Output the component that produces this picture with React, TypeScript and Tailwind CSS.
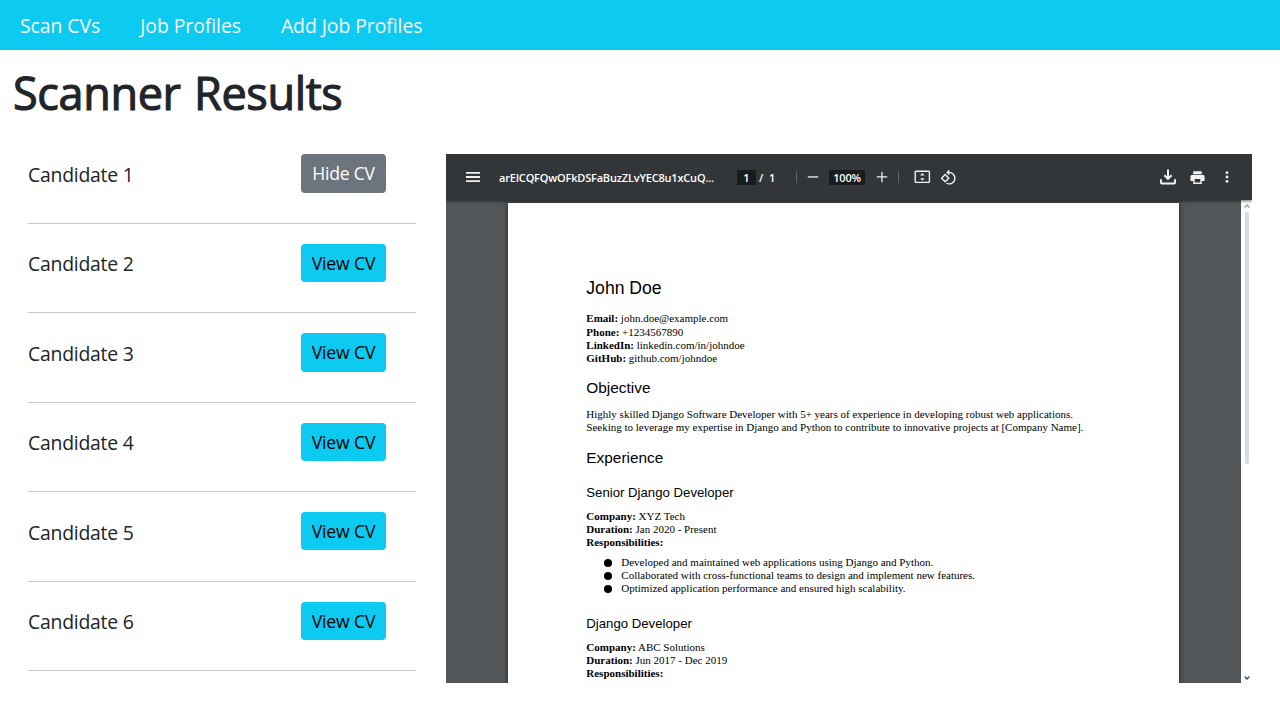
import type { ReactNode } from "react";

const UI = "font-['Open_Sans','Noto_Sans',sans-serif]";

const candidates = [1, 2, 3, 4, 5, 6];

function Candidate({ id, open }: { id: number; open: boolean }) {
  return (
    <li className="flex h-[89.45px] flex-col">
      <div className="flex h-[68.5px] items-start justify-between pr-[30px]">
        <span className="pt-[6.4px] text-[19.4px] leading-[28px] tracking-[-0.25px] text-[#212529]">
          Candidate {id}
        </span>
        <button
          className={
            open
              ? "h-[38.3px] w-[85px] rounded-[4px] bg-[#6c757d] text-[17.6px] leading-[37px] tracking-[-0.25px] whitespace-nowrap text-white"
              : "h-[38.3px] w-[85px] rounded-[4px] bg-[#0dcaf0] text-[17.6px] leading-[38px] tracking-[-0.15px] whitespace-nowrap text-black"
          }
        >
          {open ? "Hide CV" : "View CV"}
        </button>
      </div>
      <hr className="h-px border-0 bg-[#c7c8c9]" />
    </li>
  );
}

function Toolbar() {
  return (
    <div className="relative z-10 flex h-[46px] shrink-0 items-center bg-[#323639] text-[11px] font-semibold text-white shadow-[0_1px_3px_rgba(0,0,0,0.6)]">
      <svg className="ml-[20px] h-[12px] w-[14px]" viewBox="0 0 14 12" fill="#f1f1f1">
        <path d="M0 1h14v1.8H0zM0 5.1h14v1.8H0zM0 9.2h14V11H0z" />
      </svg>
      <span className="ml-[19px] w-[222px] pt-px text-[11px] tracking-[-0.19px] whitespace-nowrap">
        arEICQFQwOFkDSFaBuzZLvYEC8u1xCuQ...
      </span>
      <span className="ml-[16px] h-[15px] w-[19px] bg-[#191b1c] text-center leading-[16px]">1</span>
      <span className="ml-[3px] w-[37px] pt-px whitespace-pre">/&nbsp; 1</span>
      <span className="h-[12px] w-px bg-[#606468]" />
      <svg className="ml-[10px] size-[12px]" viewBox="0 0 12 12" fill="#f1f1f1">
        <path d="M.8 5.3h10.4v1.3H.8z" />
      </svg>
      <span className="ml-[10px] h-[15px] w-[36px] bg-[#191b1c] text-center leading-[16px] tracking-[-0.2px]">
        100%
      </span>
      <svg className="ml-[11px] size-[12px]" viewBox="0 0 12 12" fill="#f1f1f1">
        <path d="M.8 5.3h4.5V.8h1.3v4.5h4.6v1.3H6.6v4.6H5.3V6.6H.8z" />
      </svg>
      <span className="ml-[10px] h-[12px] w-px bg-[#606468]" />
      <svg className="ml-[15px] h-[14px] w-[17px]" viewBox="0 0 17 14" fill="none" stroke="#f1f1f1">
        <rect x="1.2" y="1.2" width="14.2" height="11.2" rx="0.8" strokeWidth="1.4" />
        <path d="M8.3 3 10.5 5.6H6.1zM8.3 10.8 6.1 8.2h4.4z" fill="#f1f1f1" stroke="none" />
      </svg>
      <svg className="ml-[9px] size-[17px]" viewBox="0 0 24 24" fill="#f1f1f1">
        <path d="M7.34 6.41.86 12.9l6.49 6.48 6.49-6.48-6.5-6.49zM3.69 12.9l3.66-3.66L11 12.9l-3.66 3.66-3.65-3.66zm15.67-6.26A8.95 8.95 0 0 0 13 4V.76L8.76 5 13 9.24V6c1.79 0 3.58.68 4.95 2.05a7.007 7.007 0 0 1 0 9.9 6.973 6.973 0 0 1-7.79 1.44l-1.49 1.49C10.02 21.62 11.51 22 13 22c2.3 0 4.61-.88 6.36-2.64a8.98 8.98 0 0 0 0-12.72z" />
      </svg>
      <div className="ml-auto flex items-center pr-[23px]">
        <svg className="h-[16px] w-[17px]" viewBox="0 0 17 16" fill="none" stroke="#f1f1f1" strokeWidth="2">
          <path d="M8 .5v9M4.3 6.3 8 9.9l3.7-3.6M1 10.2v3.6q0 .8.8.8h12.4q.8 0 .8-.8v-3.6" />
        </svg>
        <svg className="ml-[12px] size-[17px]" viewBox="0 0 24 24" fill="#f1f1f1">
          <path fillRule="evenodd" d="M19 8H5c-1.66 0-3 1.34-3 3v6h4v4h12v-4h4v-6c0-1.66-1.34-3-3-3zm-3 11H8v-5h8v5zM18 3H6v4h12V3z" />
        </svg>
        <svg className="ml-[19px] h-[12px] w-[4px]" viewBox="0 0 4 12" fill="#f1f1f1">
          <circle cx="2" cy="1.7" r="1.4" />
          <circle cx="2" cy="6" r="1.4" />
          <circle cx="2" cy="10.3" r="1.4" />
        </svg>
      </div>
    </div>
  );
}

function Field({ label, children }: { label: string; children?: ReactNode }) {
  return (
    <p>
      <b>{label}:</b> {children}
    </p>
  );
}

function Bullet({ children }: { children: ReactNode }) {
  return (
    <li className="flex items-center">
      <span className="mr-[9.5px] ml-[17.5px] size-[8px] rounded-full bg-black" />
      {children}
    </li>
  );
}

function Resume() {
  return (
    <article className="ml-[62px] h-[900px] w-[671px] bg-white pt-[74px] pl-[78.3px] font-['Liberation_Serif',serif] text-[11px] leading-[13.15px] text-black shadow-[0_0_5px_rgba(0,0,0,0.6)] [&_h2]:font-['Liberation_Sans',sans-serif] [&_h3]:font-['Liberation_Sans',sans-serif]">
      <h2 className="h-[35px] text-[17.6px] leading-[23px]">John Doe</h2>
      <Field label="Email">john.doe@example.com</Field>
      <Field label="Phone">+1234567890</Field>
      <Field label="LinkedIn">linkedin.com/in/johndoe</Field>
      <Field label="GitHub">github.com/johndoe</Field>
      <h2 className="mt-[12.2px] h-[31px] text-[15.4px] leading-[22px]">Objective</h2>
      <p>Highly skilled Django Software Developer with 5+ years of experience in developing robust web applications.</p>
      <p>Seeking to leverage my expertise in Django and Python to contribute to innovative projects at [Company Name].</p>
      <h2 className="mt-[12.6px] h-[35px] text-[15.4px] leading-[22px]">Experience</h2>
      <h3 className="h-[28px] text-[13.2px] leading-[22px]">Senior Django Developer</h3>
      <Field label="Company">XYZ Tech</Field>
      <Field label="Duration">Jan 2020 - Present</Field>
      <Field label="Responsibilities" />
      <ul className="mt-[6.6px]">
        <Bullet>Developed and maintained web applications using Django and Python.</Bullet>
        <Bullet>Collaborated with cross-functional teams to design and implement new features.</Bullet>
        <Bullet>Optimized application performance and ensured high scalability.</Bullet>
      </ul>
      <h3 className="mt-[17px] h-[28.5px] text-[13.2px] leading-[22px]">Django Developer</h3>
      <Field label="Company">ABC Solutions</Field>
      <Field label="Duration">Jun 2017 - Dec 2019</Field>
      <Field label="Responsibilities" />
    </article>
  );
}

function PdfViewer() {
  return (
    <section className="flex h-[529px] w-[806px] flex-col overflow-hidden bg-[#525659]">
      <Toolbar />
      <div className="flex min-h-0 flex-1">
        <div className="min-w-0 flex-1 overflow-hidden pt-[3px]">
          <Resume />
        </div>
        <div className="flex w-[11px] flex-col items-center bg-white pt-[4px] pb-[3px]">
          <svg className="h-[4px] w-[6px]" viewBox="0 0 6 4" fill="none" stroke="#9a9a9a" strokeWidth="1.3">
            <path d="M.6 3.5 3 1l2.4 2.5" />
          </svg>
          <div className="mt-[4px] h-[252px] w-[4px] rounded-full bg-[#d2dce4]" />
          <svg className="mt-auto h-[4px] w-[6px]" viewBox="0 0 6 4" fill="none" stroke="#555" strokeWidth="1.5">
            <path d="M.6.5 3 3 5.4.5" />
          </svg>
        </div>
      </div>
    </section>
  );
}

export default function App() {
  return (
    <div className={`h-[722px] overflow-hidden bg-white ${UI}`}>
      <nav className="flex h-[50px] items-center gap-[40px] bg-[#0dcaf0] pt-[2px] pl-[20px] text-[19.4px] tracking-[-0.06px] text-[#f8f9fa]">
        <a>Scan CVs</a>
        <a>Job Profiles</a>
        <a>Add Job Profiles</a>
      </nav>
      <h1 className="h-[104.4px] pt-[13px] pl-[13px] text-[45px] leading-[60px] font-medium tracking-[-0.35px] [word-spacing:2px] text-[#212529] [-webkit-text-stroke:1.1px_#212529]">
        Scanner Results
      </h1>
      <main className="flex gap-[30px] pl-[28px]">
        <ul className="w-[388px]">
          {candidates.map((id) => (
            <Candidate key={id} id={id} open={id === 1} />
          ))}
        </ul>
        <PdfViewer />
      </main>
    </div>
  );
}
